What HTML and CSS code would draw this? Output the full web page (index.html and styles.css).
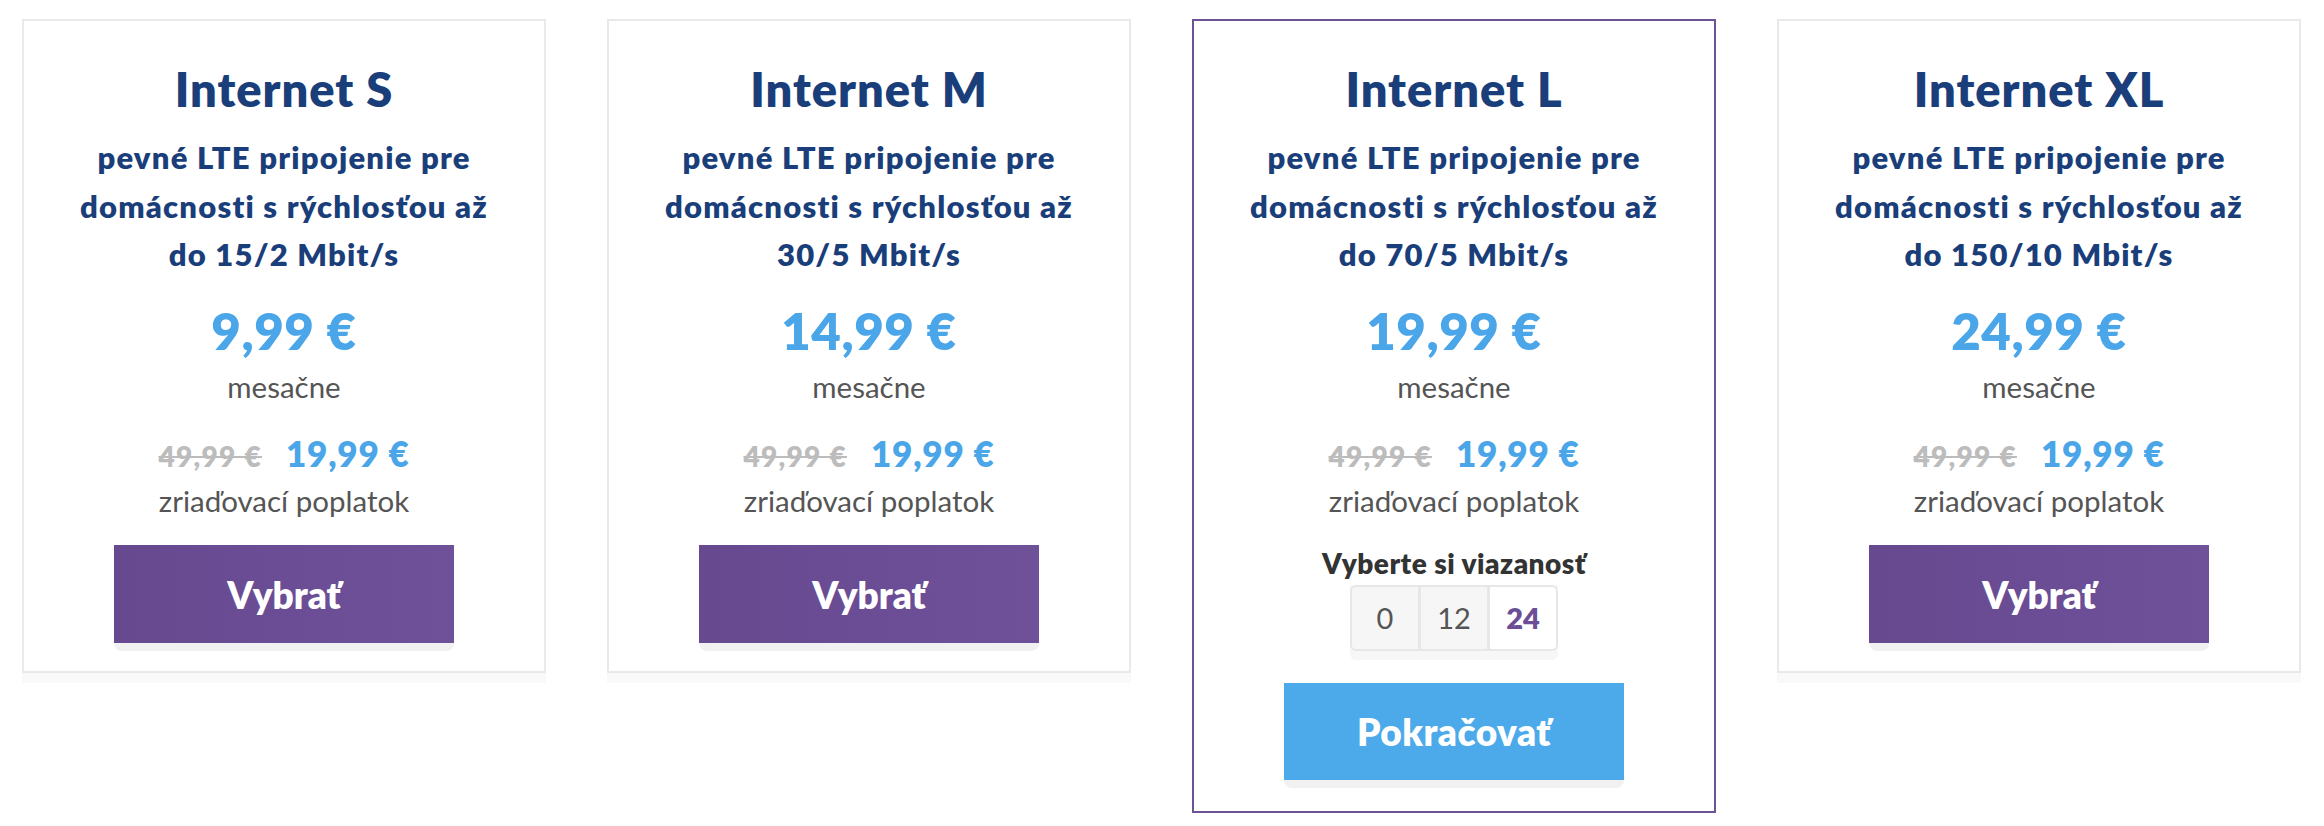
FILE: index.html
```html
<!DOCTYPE html>
<html lang="sk">
<head>
<meta charset="utf-8">
<title>Internet</title>
<link rel="stylesheet" href="styles.css">
</head>
<body>
<main class="plans">
  <section class="card">
    <h2 class="title">Internet S</h2>
    <p class="subtitle">pevné LTE pripojenie pre<br>domácnosti s rýchlosťou až<br>do 15/2 Mbit/s</p>
    <div class="price">9,99 €</div>
    <div class="period">mesačne</div>
    <div class="setup"><span class="old">49,99 €</span><span class="new">19,99 €</span></div>
    <div class="setup-label">zriaďovací poplatok</div>
    <div class="btn-shell"><button class="btn btn-purple">Vybrať</button></div>
  </section>
  <section class="card">
    <h2 class="title">Internet M</h2>
    <p class="subtitle">pevné LTE pripojenie pre<br>domácnosti s rýchlosťou až<br>30/5 Mbit/s</p>
    <div class="price">14,99 €</div>
    <div class="period">mesačne</div>
    <div class="setup"><span class="old">49,99 €</span><span class="new">19,99 €</span></div>
    <div class="setup-label">zriaďovací poplatok</div>
    <div class="btn-shell"><button class="btn btn-purple">Vybrať</button></div>
  </section>
  <section class="card card-active">
    <h2 class="title">Internet L</h2>
    <p class="subtitle">pevné LTE pripojenie pre<br>domácnosti s rýchlosťou až<br>do 70/5 Mbit/s</p>
    <div class="price">19,99 €</div>
    <div class="period">mesačne</div>
    <div class="setup"><span class="old">49,99 €</span><span class="new">19,99 €</span></div>
    <div class="setup-label">zriaďovací poplatok</div>
    <div class="commit-label">Vyberte si viazanosť</div>
    <div class="toggle-shell">
      <div class="toggle">
        <span class="seg">0</span>
        <span class="seg">12</span>
        <span class="seg seg-on">24</span>
      </div>
    </div>
    <div class="btn-shell btn-shell-gap"><button class="btn btn-blue">Pokračovať</button></div>
  </section>
  <section class="card">
    <h2 class="title">Internet XL</h2>
    <p class="subtitle">pevné LTE pripojenie pre<br>domácnosti s rýchlosťou až<br>do 150/10 Mbit/s</p>
    <div class="price">24,99 €</div>
    <div class="period">mesačne</div>
    <div class="setup"><span class="old">49,99 €</span><span class="new">19,99 €</span></div>
    <div class="setup-label">zriaďovací poplatok</div>
    <div class="btn-shell"><button class="btn btn-purple">Vybrať</button></div>
  </section>
</main>
</body>
</html>
```

FILE: styles.css
```css
* { box-sizing: border-box; }

html, body {
  margin: 0;
  padding: 0;
  background: #ffffff;
}

body {
  font-family: Lato, "Open Sans", "Liberation Sans", sans-serif;
}

.plans {
  display: flex;
  align-items: flex-start;
  gap: 61px;
  padding: 19px 0 0 22px;
}

.card {
  width: 524px;
  flex: 0 0 524px;
  border: 2px solid #e9e9e9;
  background: #ffffff;
  box-shadow: 0 10px 0 #f9f9f9;
  padding: 40px 0 20px;
  display: flex;
  flex-direction: column;
  align-items: center;
  text-align: center;
}

.card-active {
  border-color: #6b5394;
  padding-bottom: 23px;
}

.title {
  margin: 0;
  font-size: 47px;
  line-height: 56px;
  font-weight: 800;
  letter-spacing: 1px;
  color: #1a3e7a;
}

.subtitle {
  margin: 16px 0 0;
  font-size: 31px;
  line-height: 48.5px;
  font-weight: 800;
  letter-spacing: 1.2px;
  color: #1a3e7a;
}

.price {
  margin-top: 21px;
  font-size: 51px;
  line-height: 61px;
  font-weight: 800;
  letter-spacing: 0.5px;
  color: #4aa6e8;
}

.period {
  margin-top: 6px;
  font-size: 29.5px;
  line-height: 40px;
  color: #555555;
}

.setup {
  margin-top: 23px;
  display: flex;
  align-items: baseline;
  gap: 24px;
  line-height: 46px;
  font-weight: 800;
}

.old {
  font-size: 28px;
  letter-spacing: 1.3px;
  color: #bcbcbc;
  text-decoration: line-through;
}

.new {
  font-size: 35px;
  letter-spacing: 0.8px;
  color: #4aa6e8;
}

.setup-label {
  margin-top: 2px;
  font-size: 29.5px;
  line-height: 40px;
  color: #555555;
}

.btn-shell {
  margin-top: 24.5px;
  width: 340px;
  padding-bottom: 8px;
  background: #f1f1f1;
  border-radius: 0 0 8px 8px;
}

.btn-shell-gap {
  margin-top: 23px;
}

.btn {
  display: block;
  width: 100%;
  height: 98px;
  border: 0;
  margin: 0;
  padding: 0;
  font-family: inherit;
  font-size: 37px;
  font-weight: 800;
  color: #ffffff;
  cursor: pointer;
}

.btn-purple {
  background: linear-gradient(90deg, #674990 0%, #6f519a 100%);
}

.btn-blue {
  background: #4daaea;
  height: 97px;
  letter-spacing: 0.5px;
}

.commit-label {
  margin-top: 24px;
  font-size: 28px;
  line-height: 36px;
  font-weight: 800;
  letter-spacing: 0.5px;
  color: #333333;
}

.toggle-shell {
  margin-top: 4px;
  padding-bottom: 9px;
  background: #f7f7f7;
  border-radius: 0 0 6px 6px;
}

.toggle {
  display: flex;
  height: 66px;
  border: 2px solid #e7e7e7;
  border-radius: 6px;
  overflow: hidden;
  background: #e7e7e7;
  gap: 3px;
}

.seg {
  width: 66px;
  display: flex;
  align-items: center;
  justify-content: center;
  background: #f6f6f6;
  font-size: 29px;
  color: #555555;
}

.seg-on {
  background: #ffffff;
  color: #6b4e96;
  font-weight: 800;
}
```
